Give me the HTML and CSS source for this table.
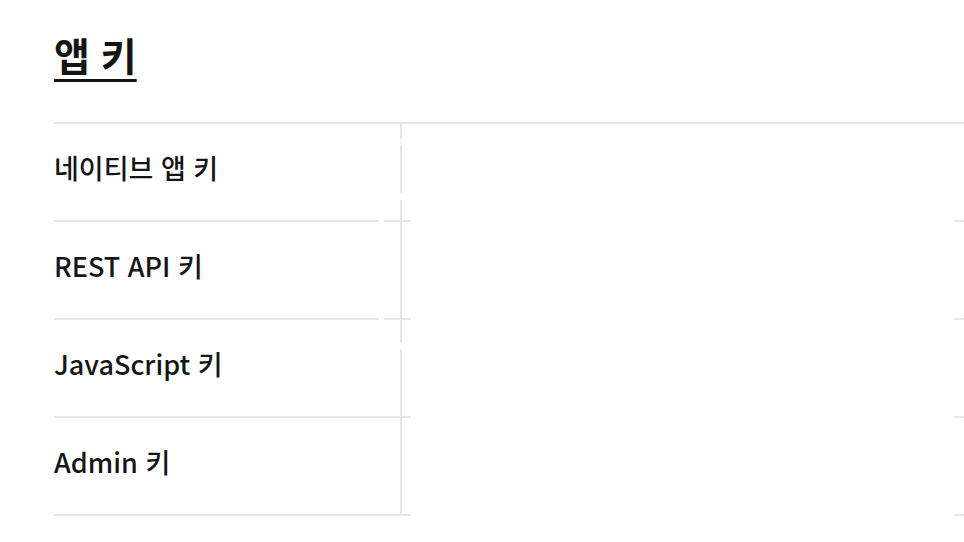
FILE: index.html
```html
<!DOCTYPE html>
<html lang="ko">
<head>
<meta charset="utf-8">
<title>앱 키</title>
<link rel="stylesheet" href="styles.css">
</head>
<body>
<main class="page">
  <h1 class="title">앱 키</h1>
  <div class="table">
    <div class="row">
      <div class="key key--split">
        <div class="key-name">네이티브 앱 키</div>
        <div class="key-sep key-sep--first"></div>
      </div>
      <div class="value"><span class="value-tick"></span></div>
    </div>
    <div class="row">
      <div class="key key--split">
        <div class="key-name">REST API 키</div>
        <div class="key-sep"></div>
      </div>
      <div class="value"><span class="value-tick"></span></div>
    </div>
    <div class="row">
      <div class="key">
        <div class="key-name">JavaScript 키</div>
        <div class="key-sep key-sep--third"></div>
      </div>
      <div class="value"><span class="value-tick"></span></div>
    </div>
    <div class="row">
      <div class="key">
        <div class="key-name">Admin 키</div>
        <div class="key-sep"></div>
      </div>
      <div class="value"><span class="value-tick"></span></div>
    </div>
  </div>
</main>
</body>
</html>
```

FILE: styles.css
```css
html, body {
  margin: 0;
  padding: 0;
  background: #ffffff;
}

body {
  font-family: "Noto Sans CJK KR", "Noto Sans", sans-serif;
  color: #151515;
}

.page {
  padding: 24px 0 0 54px;
}

.title {
  margin: 0;
  font-size: 39px;
  font-weight: 700;
  line-height: 60px;
  text-decoration: underline;
  text-decoration-thickness: 3px;
  text-underline-offset: 8px;
}

.table {
  margin-top: 38px;
  border-top: 2px solid #e6e6e6;
}

.row {
  display: flex;
  height: 98px;
}

.key {
  width: 357px;
  flex: none;
  display: flex;
  box-sizing: border-box;
  padding-bottom: 2px;
  background: linear-gradient(#e6e6e6, #e6e6e6) left bottom / 100% 2px no-repeat;
}

.key--split {
  background: linear-gradient(to right, #e6e6e6 325px, transparent 325px, transparent 330px, #e6e6e6 330px) left bottom / 100% 2px no-repeat;
}

.key-name {
  flex: 1;
  display: flex;
  align-items: center;
  padding-bottom: 10px;
  font-size: 27px;
  font-weight: 500;
}

.key-sep {
  width: 2px;
  margin-right: 9px;
  background: #e6e6e6;
}

.key-sep--first {
  background: linear-gradient(#e6e6e6 14px, #f2f2f2 14px, #f2f2f2 21px, #e6e6e6 21px, #e6e6e6 69px, transparent 69px, transparent 76px, #e6e6e6 76px);
}

.key-sep--third {
  background: linear-gradient(#e6e6e6 23px, transparent 23px, transparent 29px, #e6e6e6 29px);
}

.value {
  flex: 1;
  display: flex;
  justify-content: flex-end;
  align-items: flex-end;
}

.value-tick {
  width: 10px;
  height: 2px;
  background: #e6e6e6;
}
```
